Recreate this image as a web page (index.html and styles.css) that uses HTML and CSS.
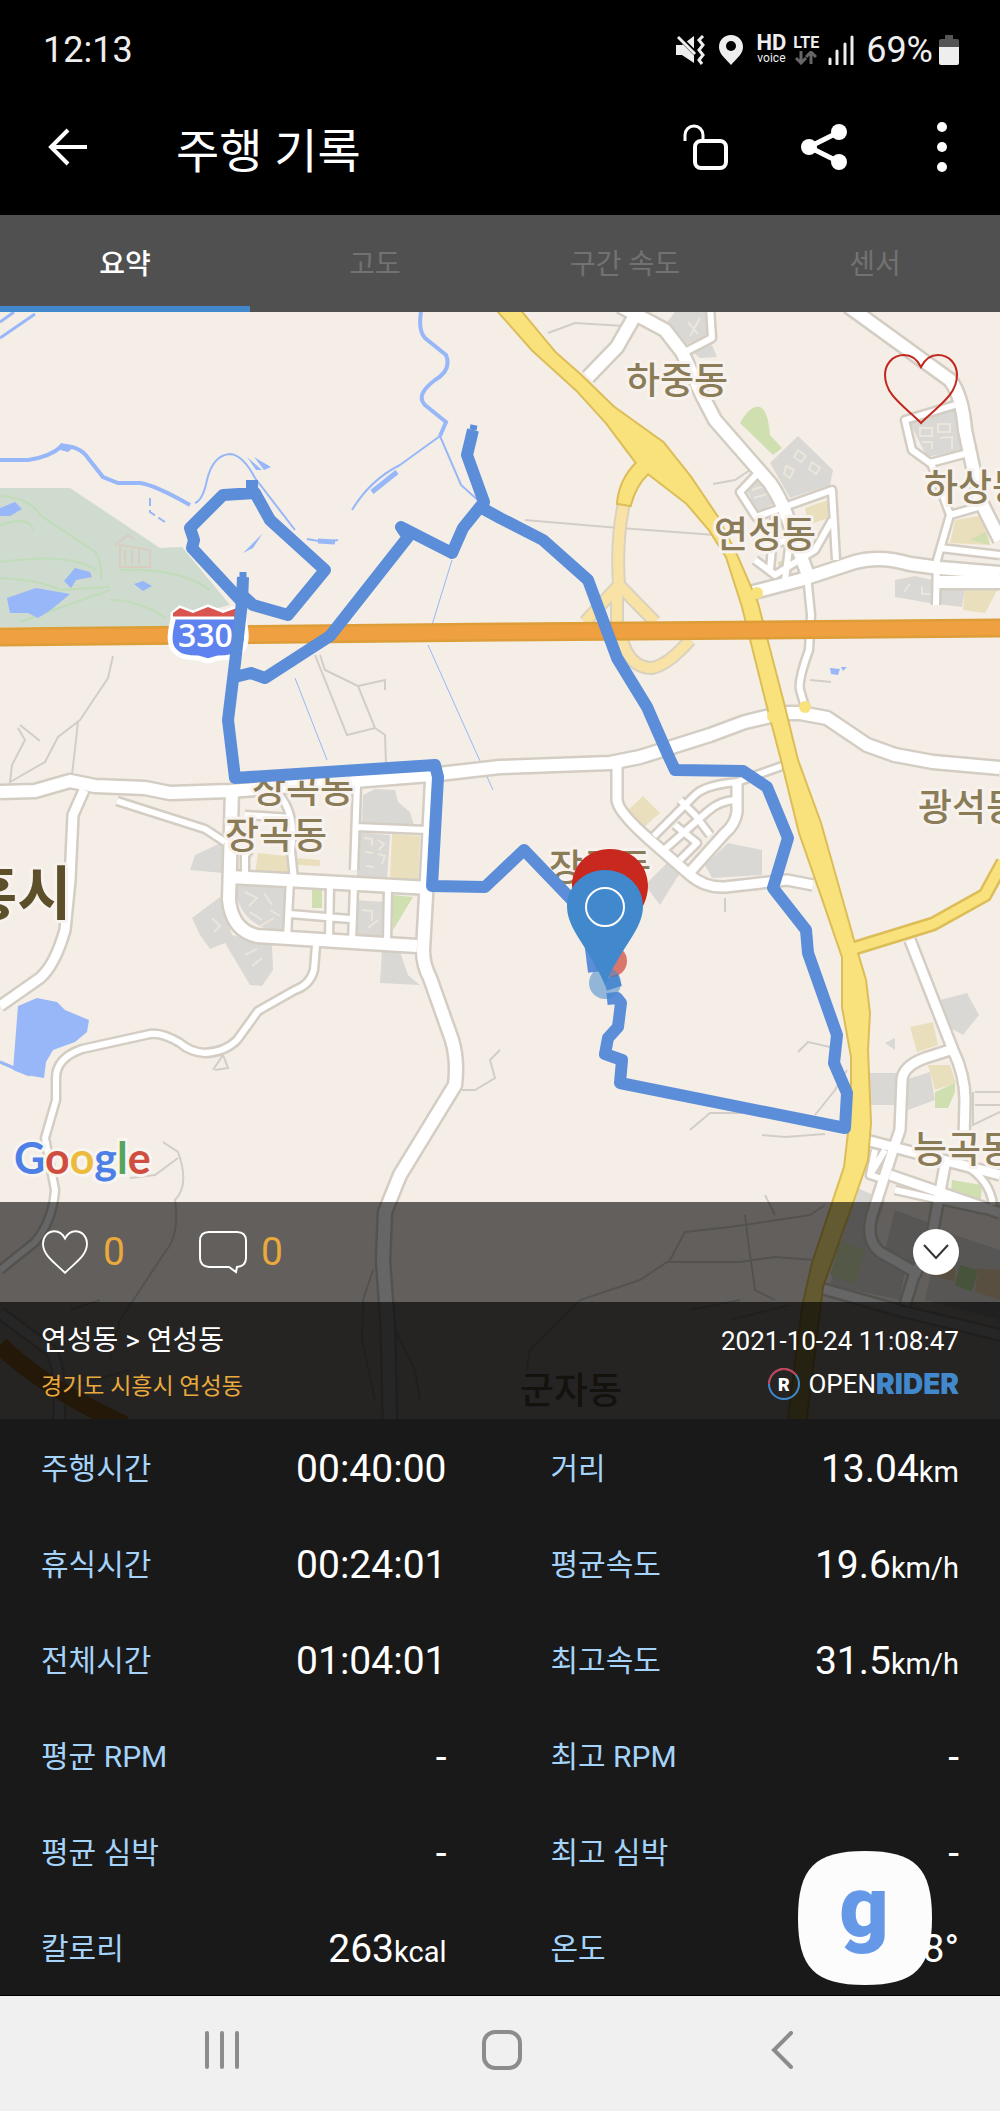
FILE: index.html
```html
<!DOCTYPE html>
<html lang="ko">

<head>
  <meta charset="UTF-8">
  <meta name="viewport" content="width=device-width, initial-scale=1.0">
  <title>주행 기록</title>
  <link rel="stylesheet" href="styles.css">
</head>

<body>
  <div class="status-bar">
    <span class="clock">12:13</span>
    <div class="status-icons">
      <svg class="icon-mute" width="30" height="30" viewBox="0 0 30 30">
        <path d="M0 10h6l12-9v27L6 20H0z" fill="#eee" />
        <path d="M1 0l22 22" stroke="#000" stroke-width="5" />
        <path d="M2 2l17 17" stroke="#eee" stroke-width="3" />
        <path d="M27 1l-4 4 4 5-4 5 4 5-4 5 3 4" fill="none" stroke="#eee" stroke-width="3" />
      </svg>
      <svg class="icon-place" width="24" height="30" viewBox="0 0 24 30">
        <path d="M12 0C5 0 0 5 0 12c0 7 6 11 12 18 6-7 12-11 12-18C24 5 19 0 12 0z" fill="#eee" />
        <circle cx="12" cy="11" r="5" fill="#000" />
      </svg>
      <div class="badge-hd"><b>HD</b><small>voice</small></div>
      <div class="badge-lte">
        <b>LTE</b>
        <svg width="22" height="14" viewBox="0 0 22 14">
          <path d="M6 0v11M1 7l5 5 5-5M16 13V2M11 6l5-5 5 5" fill="none" stroke="#666" stroke-width="3" />
        </svg>
      </div>
      <svg class="icon-signal" width="26" height="30" viewBox="0 0 26 30">
        <path d="M2 29v-5M9 29V16M17 29V9M24 29V2" stroke="#eee" stroke-width="3" stroke-linecap="round" />
      </svg>
      <span class="percent">69%</span>
      <svg class="icon-battery" width="20" height="30" viewBox="0 0 20 30">
        <path d="M6 0h8v4h4q2 0 2 2v6H0V6q0-2 2-2h4z" fill="#555" />
        <path d="M0 12h20v16q0 2-2 2H2q-2 0-2-2z" fill="#eee" />
      </svg>
    </div>
  </div>

  <header class="app-bar">
    <button class="icon-button" aria-label="뒤로">
      <svg width="40" height="38" viewBox="0 0 40 38">
        <path d="M20 2L3 19l17 17M3 19h36" fill="none" stroke="#fff" stroke-width="4" />
      </svg>
    </button>
    <h1>주행 기록</h1>
    <button class="icon-button" aria-label="잠금 해제">
      <svg width="46" height="46" viewBox="0 0 46 46">
        <path d="M2 17v-6a9 9 0 0 1 18 0v6" fill="none" stroke="#fff" stroke-width="3" />
        <rect x="12" y="17" width="31" height="27" rx="6" fill="none" stroke="#fff" stroke-width="4" />
      </svg>
    </button>
    <button class="icon-button" aria-label="공유">
      <svg width="46" height="46" viewBox="0 0 46 46">
        <path d="M38 8L8 23l30 15" fill="none" stroke="#fff" stroke-width="5" />
        <circle cx="38" cy="8" r="8" fill="#fff" />
        <circle cx="8" cy="23" r="8" fill="#fff" />
        <circle cx="38" cy="38" r="8" fill="#fff" />
      </svg>
    </button>
    <button class="icon-button" aria-label="더보기">
      <svg width="10" height="52" viewBox="0 0 10 52">
        <g fill="#fff">
          <circle cx="5" cy="6" r="5" />
          <circle cx="5" cy="26" r="5" />
          <circle cx="5" cy="46" r="5" />
        </g>
      </svg>
    </button>
  </header>

  <nav class="tabs">
    <a href="#summary" class="tab active">요약</a>
    <a href="#altitude" class="tab">고도</a>
    <a href="#section" class="tab">구간 속도</a>
    <a href="#sensor" class="tab">센서</a>
  </nav>

  <section class="map-area" id="summary">
    <svg class="map" viewBox="0 312 1000 1107" preserveAspectRatio="xMidYMid slice">
      <defs>
        <g id="roads">
          <g class="w13">
            <path d="M0 792L35 791L70 781L95 786L145 788L170 793L230 791L430 775L500 767L610 763L640 757L710 735L745 722L783 713L800 713L827 718L867 745L895 755L933 762L1000 768" />
            <path d="M232 790L229 900Q232 930 257 936L417 946" />
            <path d="M230 877L430 888" />
            <path d="M432 780L428 860L423 950Q423 965 430 978L452 1040Q458 1060 455 1085L400 1175L385 1212L383 1260L388 1330L390 1425" />
            <path d="M750 593L800 580L855 562Q880 555 910 564L940 568L1000 573" />
            <path d="M937 582L1000 582" />
            <path d="M637 312L617 347L588 377" />
            <path d="M620 306L665 330L682 352L702 395L715 420L770 483Q785 505 793 535L808 575" />
            <path d="M848 306L950 380Q962 395 965 430L980 500L1000 540" />
          </g>
          <g class="w9">
            <path d="M84 790L73 815L70 880L65 930Q55 965 40 978L0 1006" />
            <path d="M617 765L617 800Q618 812 650 840L690 875Q705 888 725 887L787 880L813 885" />
            <path d="M737 780L737 812Q735 825 725 833L690 872" />
            <path d="M910 940L953 1050Q965 1075 965 1100L964 1140" />
            <path d="M950 1050L925 1058Q903 1066 902 1080L900 1130L893 1150L872 1215Q865 1240 880 1252L915 1272L905 1305" />
            <path d="M866 1140L1000 1175" />
            <path d="M890 1175L1000 1213" />
            <path d="M945 1165L932 1235L915 1275" />
            <path d="M820 1288L905 1312L1000 1335" />
            <path d="M0 1313L50 1350Q62 1365 59 1425" />
          </g>
          <g class="w6">
            <path d="M117 801L205 829L225 842" />
            <path d="M316 945L314 970Q310 985 295 990L258 1011L237 1040Q225 1052 205 1053Q190 1052 180 1043Q162 1032 150 1034L82 1049Q56 1058 56 1078L56 1100L45 1138L55 1190Q53 1220 35 1242L0 1270" />
            <path d="M357 785L354 870M356 827L426 830M290 880L287 938M354 886L352 942M388 886L387 944M330 884L329 940M290 914L350 919M280 796Q296 815 291 850L294 880M245 815L292 818M245 875L245 855L250 850" />
            <path d="M654 836L695 795Q705 785 737 782M665 849L707 812Q720 800 737 800M680 860L697 843L675 825M710 835L695 815L680 800M737 782L782 766" />
            <path d="M685 352L712 338L710 306" />
            <path d="M955 405L905 420L912 450L930 463L968 453" />
            <path d="M807 575L811 615L809 650Q798 680 800 690L805 707" />
            <path d="M758 473L740 492L756 517L832 490L836 560M775 515L770 570M755 560L775 575L815 550L832 520M765 545L790 540L785 580" />
            <path d="M930 460L950 515L937 560L936 605M950 515L985 505M940 548L1000 555M937 568L995 572" />
            <path d="M870 1175L885 1150M895 1190L985 1210M875 1150L870 1175L885 1180M965 1165Q990 1180 993 1205" />
          </g>
        </g>
        <g id="highways">
          <path d="M494 306L533 350L577 390L607 423L637 463Q620 480 618 503L630 505Q635 485 648 473L687 503L710 530L727 557L743 607L767 703L782 760L800 833L820 890L843 957L843 1007L852 1057L852 1107L845 1167L833 1203L813 1263L803 1307L788 1425L805 1425L822 1287L853 1200L867 1160L870 1123L867 1050L869 1013L865 980L853 940L820 823L797 760L783 703L757 603L737 557L717 517L690 477L663 443L613 407L580 375L555 353L516 306Z" />
        </g>
      </defs>

      <rect y="312" width="1000" height="1107" fill="#f5eee7" />

      <!-- parks and water -->
      <path d="M0 488H70L160 548L182 547L230 605L170 620V627H0z" fill="#cfdbce" />
      <path d="M0 496Q30 498 40 515L95 552Q102 560 101 580M0 525Q30 515 33 530M0 562Q70 552 96 570M0 578Q40 580 60 590L110 587M120 570Q180 568 210 590M20 622L110 590M110 600Q140 600 165 618" fill="none" stroke="#c0dcb9" stroke-width="2" />
      <path d="M120 545V567H150V550zM115 545L128 535L135 540M125 550V565M132 549V565M139 549V565" fill="none" stroke="#d9cdc2" stroke-width="2" />
      <g fill="#97b7f8">
        <path d="M0 508L15 502L22 509L10 516H0zM7 598L36 588L70 594L52 609L38 618L28 613L10 613zM64 581L75 568L90 572L92 577L76 580L71 588zM134 584L143 581L152 586L143 591z" />
        <path d="M18 1006L37 998L57 1002L65 1010L89 1020L87 1032L75 1042L53 1050L46 1062L44 1078L26 1075L13 1070z" />
        <path d="M243 553L263 533L253 548zM247 457L262 470L256 470zM254 457L271 467L264 470zM56 449L61 443L75 446L68 452zM830 668L840 669L838 675L831 674zM841 667H847L843 671z" />
      </g>
      <g fill="none" stroke="#97b7f8">
        <path d="M0 460H28Q50 457 62 446Q80 446 88 458L103 477L118 483H140Q155 485 190 505" stroke-width="4" />
        <path d="M195 503Q203 500 207 480Q213 455 230 454Q243 455 255 478L295 530M307 539Q325 543 338 540M352 510Q370 480 400 465L440 436L461 485L480 502" stroke-width="2" />
        <path d="M421 312Q418 330 425 338L446 355Q452 370 435 380Q415 395 425 405L446 422L440 436" stroke-width="4" />
        <path d="M372 492L397 472M318 541L335 542" stroke-width="5" />
        <path d="M150 498V512L165 522" stroke-width="2" stroke-dasharray="8 4" />
        <path d="M452 560L432 625M428 645L493 790M295 678L327 760" stroke-width="1" />
        <path d="M0 322L14 312M0 338L35 314" stroke-width="3" />
        <path d="M0 1062L30 1075" stroke-width="3" />
      </g>

      <!-- paths -->
      <g fill="none" stroke="#d2cec7" stroke-width="2">
        <path d="M113 656L108 678L80 720L58 737L45 762L10 782L12 765L25 740L18 728M78 722L72 775M20 725L40 741M315 655L347 735L375 728L385 735L386 765M320 655L325 670L358 686L375 728M358 686L385 680V690" />
        <path d="M525 520L607 527L715 535M548 333L575 323L625 326M713 484L735 480L750 470M810 680L831 682" />
        <path d="M163 1142L178 1152Q190 1185 175 1200Q180 1235 165 1252L140 1290L120 1320L110 1360M178 1158L155 1175L130 1178M215 1070L228 1068L223 1055L213 1070M462 1090L475 1090L495 1078L490 1060L500 1050" />
        <path d="M690 1130L710 1113L742 1113M762 1135L785 1137L825 1134M798 1052L808 1042L830 1047M847 1070L835 1090L815 1115M725 898V912" />
        <path d="M525 1380L530 1350L580 1300L640 1280L670 1260L685 1232L730 1227L810 1215L825 1205M765 1195L775 1215M745 1215L748 1240L755 1290L775 1300M668 1262L740 1262L775 1257L815 1260M690 1310L740 1300M730 1320L790 1305" />
        <path d="M373 1270L363 1300L362 1340L375 1400M395 1330L415 1370L420 1400M130 1370L60 1390M100 1300L70 1310M975 1092H1000M975 1105H1000M973 1092V1125L1000 1112" />
      </g>

      <!-- blocks -->
      <g fill="#d9d8d4">
        <path d="M675 312H708V335L685 345L665 325zM690 350L712 345L717 357L700 358z" />
        <path d="M770 463L798 436L833 470L830 485L790 498zM745 487L763 476L775 503L758 512zM910 423L955 410L963 450L927 457z" />
        <path d="M895 580L915 576L965 588L962 607L930 603L895 597z" />
        <path d="M363 795L375 789L395 790L398 802L410 812L414 825L362 823zM358 832L390 835L387 880L357 877zM234 885L288 887L286 932Q240 930 234 885zM355 900L385 902L384 938L353 936z" />
        <path d="M190 870L195 855L223 842V873zM192 918L220 897L232 935L272 944L273 970L262 986L250 985L225 943L210 949L200 935zM382 952H400L408 975L420 985L380 983z" />
        <path d="M728 843L762 850V875L712 878L705 865zM645 885L668 862L680 873L660 905zM940 1000L967 993L979 1015L963 1035L945 1025z" />
        <path d="M870 1073H900V1105H870zM905 1080L930 1072L935 1100L908 1110z" />
        <path d="M855 1187L885 1200L870 1245L905 1270L900 1300L830 1285zM895 1210L935 1225L915 1265L885 1250zM940 1230L1000 1250V1320L925 1300z" />
        <path d="M885 1043L895 1038V1050z" />
      </g>
      <!-- buildings -->
      <g fill="none" stroke="#ebe5dc" stroke-width="2">
        <path d="M920 428h12v8h-12zM938 424h12v8h-12zM922 442h10v7M940 438l12-1v12M798 450l8 6-5 6-7-5zM812 462l8 6-4 6-7-5zM786 466l8 4-4 8-6-4zM752 490l16-5M754 498l16-5M688 322l10 12M700 318l-10 18" />
        <path d="M364 838l8 1v7M378 840l6 4-5 6M365 852l8 1M378 854l7 2-3 8M366 866l8 1M245 892l12 6-8 8M264 893l8 12M250 912l12 8M270 910l10 6M260 926l14-8M245 955l12-6M252 966l10-8M362 910l10 1v10M368 928l10-8M212 918l8 8-6 6M910 584l-6 8M922 586v8h10" />
      </g>
      <g fill="#eadfbd">
        <path d="M805 508L828 500V518L808 525zM955 520L985 515L990 545L950 543zM965 585H1000L985 613L963 610z" />
        <path d="M392 834L420 836L418 882L390 880zM258 853L287 856L288 875L255 873zM295 858L320 860V866L296 865zM628 810L643 796L660 813L644 827zM910 1027L933 1022L938 1045L917 1052zM928 1065L950 1065L956 1083L935 1090z" />
      </g>
      <g fill="#cfdfaf">
        <path d="M740 423Q750 405 760 407Q768 410 770 435L782 448L773 455zM970 540L985 532L990 545zM778 562L793 558V567L780 570z" />
        <path d="M312 890H322V908H312zM393 895L413 897L393 930zM935 1092L955 1083V1092L948 1108H935zM952 1180L982 1185L980 1210L950 1205zM840 1240L865 1250L855 1285L830 1275z" />
      </g>
      <path d="M960 1265L978 1270L972 1292L955 1285z" fill="#b4cf95" />
      <path d="M978 1268L1000 1270V1300L975 1292zM935 1260L955 1268V1282L930 1275z" fill="#dcc6a2" />

      <use href="#roads" class="road-edge" />
      <use href="#roads" class="road-fill" />

      <!-- ramps -->
      <g fill="none">
        <path d="M624 503Q616 540 619 585L585 622M619 585L655 622M617 590V625M622 640Q630 668 652 668Q668 665 690 640" stroke="#d9d2bf" stroke-width="14" />
        <path d="M624 503Q616 540 619 585L585 622M619 585L655 622M617 590V625M622 640Q630 668 652 668Q668 665 690 640" stroke="#f8e2a5" stroke-width="10" />
      </g>

      <!-- highways -->
      <path d="M855 948L933 924L985 895L1003 862" fill="none" stroke="#dcbd58" stroke-width="15" />
      <use href="#highways" class="highway-edge" />
      <path d="M855 948L933 924L985 895L1003 862" fill="none" stroke="#f9e27c" stroke-width="10" />
      <use href="#highways" class="highway-fill" />
      <circle cx="757" cy="593" r="6" fill="#f9e27c" />
      <circle cx="805" cy="707" r="6" fill="#f9e27c" />
      <circle cx="774" cy="716" r="7" fill="#f9e27c" />
      <path d="M0 637L500 632L1000 628" fill="none" stroke="#dd9d38" stroke-width="19" />
      <path d="M0 637L500 632L1000 628" fill="none" stroke="#efa040" stroke-width="14" />
      <path d="M0 1345Q40 1385 125 1425" fill="none" stroke="#efa040" stroke-width="18" />

      <!-- shield -->
      <path d="M173 614L180 608L193 613L208 607L223 613L237 608L244 614V620Q250 645 240 652Q235 658 218 658L208 661L198 658Q181 658 176 652Q166 645 173 620z" fill="#5f83ee" stroke="#fff" stroke-width="5" />
      <path d="M173 617V613L180 608L193 613L208 607L223 613L237 608L244 613V617z" fill="#d9534f" />
      <path d="M172 618H245" stroke="#fff" stroke-width="3" />
      <text x="178" y="647" class="shield-text">330</text>

      <!-- place names -->
      <g class="place">
        <text x="626" y="394">하중동</text>
        <text x="714" y="548">연성동</text>
        <text x="924" y="501">하상동</text>
        <text x="252" y="803">장곡동</text>
        <text x="225" y="849">장곡동</text>
        <text x="549" y="881">장곡동</text>
        <text x="918" y="821">광석동</text>
        <text x="913" y="1163">능곡동</text>
        <text x="520" y="1404">군자동</text>
      </g>
      <text x="-37" y="915" class="city">흥시</text>

      <!-- ride track -->
      <g class="track">
        <path d="M473 430L467 455L484 502L463 528L452 553L401 527L408 537L330 636L265 678L251 673L235 677" />
        <path d="M480 507L500 518L543 540L588 580L617 658L647 707L668 755L675 770L743 771L767 787L788 838L773 888L806 930L808 953L837 1035L834 1063L847 1093L845 1128L620 1083L622 1060L605 1054L608 1038L618 1027L621 1003L617 998L607 999" />
        <path d="M620 980L605 985M594 972L588 925L572 900L524 850L485 887L432 886L438 777L435 765L235 778L228 720L235 663L242 602L243 577" />
        <path d="M242 602L192 548L194 540L190 528L223 495L255 493L270 520L325 570L288 615L253 605L242 595M252 480V494" />
        <path d="M473 430L474 425M243 577V572" class="track-tip" />
      </g>

      <!-- finish and start pins -->
      <circle cx="611" cy="961" r="16" fill="#c8281d" opacity="0.6" />
      <path d="M610 849C587 849 572 866 572 886C572 910 595 930 610 963C625 930 648 910 648 886C648 866 633 849 610 849z" fill="#c8281d" />
      <circle cx="605" cy="983" r="16" fill="#4189cc" opacity="0.55" />
      <path d="M605 870C583 870 567 887 567 906C567 930 588 945 605 985C622 945 643 930 643 906C643 887 627 870 605 870z" fill="#4189cc" />
      <circle cx="605" cy="907" r="19" fill="none" stroke="#fff" stroke-width="2" />

      <text x="14" y="1174" class="google"><tspan fill="#4c80e6">G</tspan><tspan fill="#d04e3f">o</tspan><tspan fill="#ecbb3e">o</tspan><tspan fill="#4c80e6">g</tspan><tspan fill="#57a55c">l</tspan><tspan fill="#d04e3f">e</tspan></text>
    </svg>

    <button class="favorite" aria-label="즐겨찾기">
      <svg width="76" height="72" viewBox="0 0 76 72">
        <path d="M38 14C42 6 48 2 55 2C67 2 74 12 74 22C74 42 55 53 38 70C21 53 2 42 2 22C2 12 9 2 21 2C28 2 34 6 38 14z" fill="none" stroke="#c2281f" stroke-width="2" />
      </svg>
    </button>

    <div class="overlay">
      <div class="reactions">
        <button class="reaction">
          <svg width="48" height="44" viewBox="0 0 76 72">
            <path d="M38 14C42 6 48 2 55 2C67 2 74 12 74 22C74 42 55 53 38 70C21 53 2 42 2 22C2 12 9 2 21 2C28 2 34 6 38 14z" fill="none" stroke="#fff" stroke-width="3" />
          </svg>
          <span>0</span>
        </button>
        <button class="reaction">
          <svg width="48" height="44" viewBox="0 0 48 44">
            <path d="M10 2H38Q47 2 47 11V28Q47 36 38 37L37 42L30 37H10Q1 36 1 28V11Q1 2 10 2z" fill="none" stroke="#fff" stroke-width="2" />
          </svg>
          <span>0</span>
        </button>
        <button class="collapse" aria-label="접기">
          <svg width="26" height="16" viewBox="0 0 26 16">
            <path d="M1 1l12 13L25 1" fill="none" stroke="#333" stroke-width="2" />
          </svg>
        </button>
      </div>
      <div class="ride-info">
        <div>
          <p class="course">연성동 &gt; 연성동</p>
          <p class="region">경기도 시흥시 연성동</p>
        </div>
        <div class="ride-meta">
          <time>2021-10-24 11:08:47</time>
          <div class="brand">
            <svg width="34" height="34" viewBox="0 0 34 34">
              <circle cx="17" cy="17" r="15" fill="none" stroke="#4189cc" stroke-width="2" />
              <path d="M2 17A15 15 0 0 1 29 8" fill="none" stroke="#c93f50" stroke-width="2" />
              <text x="11" y="24" class="brand-mark">R</text>
            </svg>
            <span class="brand-open">OPEN</span><b class="brand-rider">RIDER</b>
          </div>
        </div>
      </div>
    </div>
  </section>

  <section class="stats">
    <table>
      <tr>
        <th scope="row">주행시간</th>
        <td>00:40:00</td>
        <th scope="row">거리</th>
        <td>13.04<small>km</small></td>
      </tr>
      <tr>
        <th scope="row">휴식시간</th>
        <td>00:24:01</td>
        <th scope="row">평균속도</th>
        <td>19.6<small>km/h</small></td>
      </tr>
      <tr>
        <th scope="row">전체시간</th>
        <td>01:04:01</td>
        <th scope="row">최고속도</th>
        <td>31.5<small>km/h</small></td>
      </tr>
      <tr>
        <th scope="row">평균 RPM</th>
        <td>-</td>
        <th scope="row">최고 RPM</th>
        <td>-</td>
      </tr>
      <tr>
        <th scope="row">평균 심박</th>
        <td>-</td>
        <th scope="row">최고 심박</th>
        <td>-</td>
      </tr>
      <tr>
        <th scope="row">칼로리</th>
        <td>263<small>kcal</small></td>
        <th scope="row">온도</th>
        <td>8°</td>
      </tr>
    </table>
    <button class="floating">
      <svg width="136" height="136" viewBox="0 0 136 136">
        <path d="M68 1C118 1 135 18 135 68C135 118 118 135 68 135C18 135 1 118 1 68C1 18 18 1 68 1z" fill="#fcfcfc" />
        <text x="67" y="86" class="floating-text">g</text>
      </svg>
    </button>
  </section>

  <footer class="nav-bar">
    <button aria-label="최근 앱">
      <svg width="36" height="38" viewBox="0 0 36 38">
        <path d="M3 2v34M18 2v34M33 2v34" stroke="#8c8c8c" stroke-width="4" stroke-linecap="round" />
      </svg>
    </button>
    <button aria-label="홈">
      <svg width="40" height="40" viewBox="0 0 40 40">
        <rect x="2" y="2" width="36" height="36" rx="11" fill="none" stroke="#8c8c8c" stroke-width="4" />
      </svg>
    </button>
    <button aria-label="이전">
      <svg width="22" height="38" viewBox="0 0 22 38">
        <path d="M20 2L3 19l17 17" fill="none" stroke="#8c8c8c" stroke-width="4" stroke-linecap="round" />
      </svg>
    </button>
  </footer>
</body>

</html>
```
FILE: styles.css
```css
* {
  box-sizing: border-box;
}

body {
  margin: 0;
  background: #000;
  color: #fff;
  font-family: Roboto, "Noto Sans CJK KR", sans-serif;
}

svg {
  display: block;
}

button {
  background: none;
  border: none;
  padding: 0;
  color: inherit;
  font-family: inherit;
  cursor: pointer;
}

.status-bar {
  height: 97px;
  padding: 2px 41px 0 43px;
  display: flex;
  justify-content: space-between;
  align-items: center;
  color: #eee;
  font-size: 36px;
}

.status-icons {
  display: flex;
  align-items: center;
}

.icon-place {
  margin-left: 13px;
}

.badge-hd,
.badge-lte {
  display: flex;
  flex-direction: column;
  align-items: center;
}

.badge-hd {
  margin-left: 14px;
  font-size: 22px;
  line-height: 17px;
}

.badge-hd small {
  font-size: 12px;
  line-height: 14px;
}

.badge-lte {
  margin-left: 7px;
  font-size: 16px;
  line-height: 16px;
}

.icon-signal {
  margin-left: 9px;
}

.percent {
  margin-left: 12px;
}

.icon-battery {
  margin-left: 6px;
}

.app-bar {
  height: 118px;
  padding: 0 28px 18px 38px;
  display: flex;
  align-items: center;
  gap: 58px;
}

.app-bar h1 {
  flex: 1;
  margin: 0 0 0 20px;
  font-size: 47px;
  font-weight: 400;
}

.icon-button {
  width: 60px;
  height: 60px;
  display: flex;
  justify-content: center;
  align-items: center;
}

.tabs {
  display: grid;
  grid-template-columns: repeat(4, 1fr);
  background: #505050;
}

.tab {
  padding: 8px 0 0;
  border-bottom: 6px solid transparent;
  color: #727272;
  font-size: 28px;
  line-height: 83px;
  text-align: center;
  text-decoration: none;
}

.tab.active {
  border-color: #4189cc;
  color: #fff;
  font-weight: 500;
}

.map-area {
  position: relative;
}

.map {
  width: 100%;
  aspect-ratio: 1000 / 1107;
}

#roads {
  fill: none;
  stroke-linejoin: round;
}

.road-edge {
  --edge: 5px;
  stroke: #d3cdc3;
}

.road-fill {
  --edge: 0px;
  stroke: #fff;
}

.w13 {
  stroke-width: calc(12px + var(--edge, 0px));
}

.w9 {
  stroke-width: calc(9px + var(--edge, 0px));
}

.w6 {
  stroke-width: calc(6px + var(--edge, 0px));
}

.highway-edge {
  fill: #dcbd58;
  stroke: #dcbd58;
  stroke-width: 4px;
}

.highway-fill {
  fill: #f9e27c;
}

.shield-text {
  fill: #fff;
  font: 600 32px "Open Sans", sans-serif;
}

.place,
.city {
  fill: #8b7c58;
  stroke: #f8f2ee;
  stroke-width: 6px;
  stroke-linejoin: round;
  paint-order: stroke;
  font: 500 37px "Noto Sans CJK KR", sans-serif;
}

.city {
  fill: #5c4f2a;
  font-size: 59px;
  font-weight: 700;
}

.track {
  fill: none;
  stroke: #5b8dd9;
  stroke-width: 12px;
  stroke-linejoin: round;
}

.track-tip {
  stroke-width: 7px;
}

.google {
  stroke: #f8f4f0;
  stroke-width: 6px;
  paint-order: stroke;
  font: 700 43px Lato, sans-serif;
}

.favorite {
  position: absolute;
  top: 41px;
  right: 41px;
}

.overlay {
  position: absolute;
  left: 0;
  right: 0;
  bottom: 0;
}

.reactions {
  height: 100px;
  padding: 0 41px;
  display: flex;
  align-items: center;
  gap: 74px;
  background: rgba(0, 0, 0, 0.6);
}

.reaction {
  display: flex;
  align-items: center;
  gap: 14px;
  color: #e9a93c;
  font-size: 39px;
}

.collapse {
  width: 46px;
  height: 46px;
  margin-left: auto;
  border-radius: 50%;
  background: #fff;
  display: flex;
  justify-content: center;
  align-items: center;
}

.ride-info {
  min-height: 117px;
  padding: 17px 41px 0;
  display: flex;
  justify-content: space-between;
  background: rgba(0, 0, 0, 0.85);
}

.ride-info p {
  margin: 0;
}

.course {
  font-size: 28px;
  line-height: 44px;
}

.region {
  color: #e9a93c;
  font-size: 23px;
  line-height: 48px;
}

.ride-meta {
  text-align: right;
}

.ride-meta time {
  display: block;
  font-size: 26px;
  line-height: 44px;
}

.brand {
  display: flex;
  justify-content: flex-end;
  align-items: center;
  height: 42px;
  font-size: 26px;
}

.brand-mark {
  fill: #fff;
  font: 900 18px Roboto, sans-serif;
}

.brand-open {
  margin-left: 7px;
}

.brand-rider {
  color: #4189cc;
  font-family: Inter, sans-serif;
  font-size: 28px;
  font-weight: 900;
}

.stats {
  position: relative;
  padding: 0 41px;
  background: #191919;
}

.stats table {
  width: 100%;
  table-layout: fixed;
  border-collapse: collapse;
}

.stats tr {
  height: 96px;
}

.stats th,
.stats td {
  padding: 0;
}

.stats th {
  width: 20%;
  padding-bottom: 3px;
  color: #a5d3fa;
  font-size: 30px;
  font-weight: 400;
  text-align: left;
}

.stats td {
  padding-top: 3px;
  font-size: 39px;
  text-align: right;
}

.stats td:nth-child(2) {
  width: 35.5%;
  padding-right: 104px;
}

.stats small {
  font-size: 29px;
}

.floating {
  position: absolute;
  right: 67px;
  bottom: 9px;
}

.floating-text {
  fill: #6698e8;
  font: 900 86px Roboto, sans-serif;
  text-anchor: middle;
}

.nav-bar {
  height: 116px;
  padding: 0 78px 8px 82px;
  border-top: 1px solid #000;
  display: grid;
  grid-template-columns: repeat(3, 1fr);
  background: #f0f0f0;
}

.nav-bar button {
  display: flex;
  justify-content: center;
  align-items: center;
}
```
